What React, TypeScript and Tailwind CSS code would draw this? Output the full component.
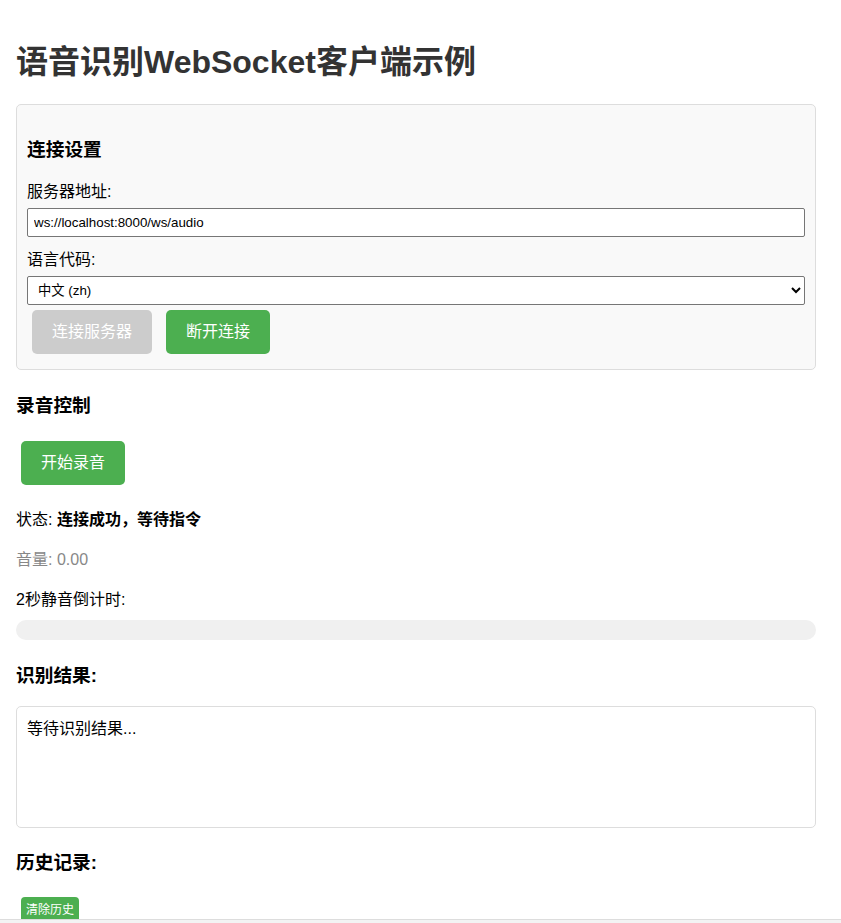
import React from "react";

const FONT = '"Liberation Sans", Arial, "Noto Sans CJK SC", sans-serif';

export default function App() {
  return (
    <div className="min-h-[923px] bg-white text-black" style={{ fontFamily: FONT }}>
      <div className="ml-4 w-[800px] pb-[40px]">
        <h1 className="mt-[42px] mb-[22px] text-[32px] leading-[40px] font-bold text-[#333]">
          语音识别WebSocket客户端示例
        </h1>

        <div className="rounded-[5px] border border-[#ddd] bg-[#f9f9f9] p-[10px]">
          <h3 className="mt-[21px] mb-[17px] text-[18.72px] leading-[27px] font-bold">连接设置</h3>
          <label className="mb-[5px] block text-[16px] leading-[23px]">服务器地址:</label>
          <input
            className="mb-[11px] block h-[29px] w-full rounded-[2px] border border-[#767676] bg-white px-[6px] text-[13.33px] text-black outline-none"
            defaultValue="ws://localhost:8000/ws/audio"
          />
          <label className="mb-[5px] block text-[16px] leading-[23px]">语言代码:</label>
          <select
            className="block h-[29px] w-full rounded-[2px] border border-[#767676] bg-white px-[6px] text-[13.33px] text-black outline-none"
            defaultValue="zh"
          >
            <option value="zh">中文 (zh)</option>
            <option value="en">English (en)</option>
          </select>
          <div className="mt-[5px] mb-[5px] flex gap-[14px] pl-[5px]">
            <button className="h-[44px] w-[120px] rounded-[5px] bg-[#cccccc] text-[16px] text-white">
              连接服务器
            </button>
            <button className="h-[44px] w-[104px] rounded-[5px] bg-[#4CAF50] text-[16px] text-white">
              断开连接
            </button>
          </div>
        </div>

        <h3 className="mt-[22px] text-[18.72px] leading-[27px] font-bold">录音控制</h3>
        <div className="mt-[22px] pl-[5px]">
          <button className="h-[44px] w-[104px] rounded-[5px] bg-[#4CAF50] text-[16px] text-white">
            开始录音
          </button>
        </div>

        <p className="mt-[23px] text-[16px] leading-[24px]">
          状态: <span className="font-bold">连接成功，等待指令</span>
        </p>
        <p className="mt-[16px] text-[16px] leading-[24px] text-[#888]">音量: 0.00</p>
        <p className="mt-[16px] text-[16px] leading-[24px]">2秒静音倒计时:</p>
        <div className="mt-[8px] h-[20px] w-full rounded-full bg-[#f0f0f0]" />

        <h3 className="mt-[22px] text-[18.72px] leading-[27px] font-bold">识别结果:</h3>
        <div className="mt-[17px] h-[122px] rounded-[5px] border border-[#ddd] p-[10px] text-[16px] leading-[24px]">
          等待识别结果...
        </div>

        <h3 className="mt-[21px] text-[18.72px] leading-[27px] font-bold">历史记录:</h3>
        <div className="mt-[21px] pl-[5px]">
          <button className="h-[26px] w-[58px] rounded-[4px] bg-[#4CAF50] text-[12px] leading-[22px] text-white">
            清除历史
          </button>
        </div>
      </div>
      <div className="fixed bottom-0 left-0 h-[4px] w-full border-t border-[#dddddd] bg-[#f3f3f3]" />
    </div>
  );
}
